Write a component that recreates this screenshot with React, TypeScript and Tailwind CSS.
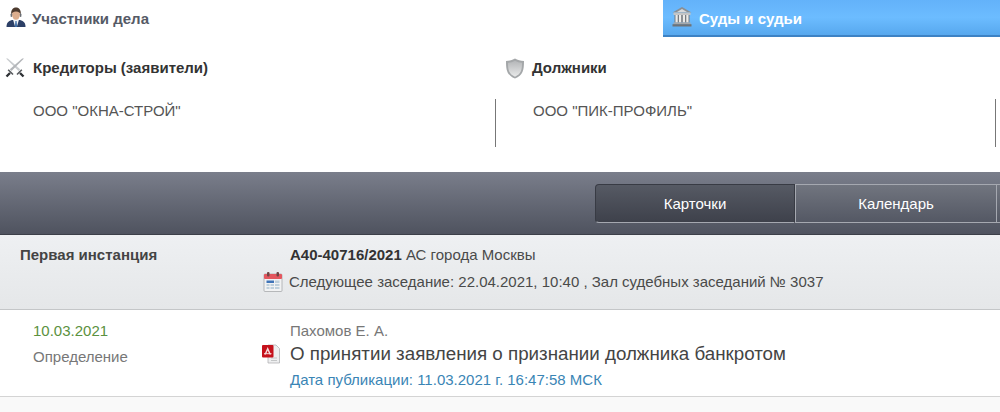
const font = "font-['Liberation_Sans',Arial,sans-serif]";

function PersonIcon() {
  return (
    <svg width="20" height="20" viewBox="0 0 20 20" className="shrink-0">
      <path d="M.5 20c0-4 1.500-5.800 5.500-7h8c4 1.200 5.500 3 5.500 7z" fill="#2c3f66" />
      <path d="M7 12.500h6L10.800 20H9.200z" fill="#f1f3f6" />
      <path d="M9.400 14h1.200l.5 6H8.900z" fill="#3d6ea8" />
      <ellipse cx="10" cy="7.500" rx="4" ry="5.200" fill="#dcae8e" />
      <path d="M5.300 8C4.500 3 7 .5 10 .5S15.500 3 14.700 8c-.6-2.200-1.800-3.500-4.700-3.500S5.900 5.800 5.300 8z" fill="#4c3a2e" />
      <rect x="4.600" y="6.500" width="1.500" height="3.500" rx=".7" fill="#6b6f75" />
      <rect x="13.900" y="6.500" width="1.500" height="3.500" rx=".7" fill="#6b6f75" />
    </svg>
  );
}

function SwordsIcon() {
  return (
    <svg width="20" height="20" viewBox="0 0 20 20" className="shrink-0">
      <path d="M1 .5 13.500 13l1.700-1.700L2.800.5z" fill="#c9cccf" />
      <path d="M19 .5 6.500 13l-1.700-1.700L17.200.5z" fill="#b3b6b9" />
      <path d="M3.200 11.800 8 16.500" stroke="#55585c" strokeWidth="1.600" />
      <path d="M16.800 11.800 12 16.500" stroke="#55585c" strokeWidth="1.600" />
      <path d="M5 15 1.500 18.500M15 15l3.500 3.500" stroke="#2e3135" strokeWidth="2.400" />
    </svg>
  );
}

function ShieldIcon() {
  return (
    <svg width="20" height="21" viewBox="0 0 20 21" className="shrink-0">
      <defs>
        <linearGradient id="sh" x1="0" y1="0" x2="0" y2="1">
          <stop offset="0" stopColor="#b4b6b8" />
          <stop offset="1" stopColor="#e9eaea" />
        </linearGradient>
      </defs>
      <path d="M10 .5c2.500 1.500 5.500 2.400 9 2.400 0 9.500-1 14-9 17.600C2 17 1 12.400 1 2.900 4.500 2.900 7.500 2 10 .5z" fill="#a4a7a9" />
      <path d="M10 2.800c2.200 1.200 4.700 1.900 7 2 0 7.600-1 11.200-7 13.900C4 16 3 12.400 3 4.800c2.300-.1 4.800-.8 7-2z" fill="url(#sh)" />
    </svg>
  );
}

function CourtIcon() {
  return (
    <svg width="20" height="20" viewBox="0 0 20 20" className="shrink-0">
      <path d="M10 0 19.500 5.500H.5z" fill="#8b8f93" />
      <path d="M10 2 15 5H5z" fill="#d8d9da" />
      <rect x="1.500" y="5.500" width="17" height="2.500" fill="#c4c5c6" />
      <rect x="2.500" y="8" width="15" height="7.500" fill="#777b80" />
      <path d="M3.500 8h2.200v7.500H3.500zM7 8h2.200v7.500H7zM10.800 8H13v7.500h-2.200zM14.300 8h2.200v7.500h-2.200z" fill="#ecebe8" />
      <rect x="1.500" y="15.500" width="17" height="1.700" fill="#a6a8aa" />
      <rect x=".5" y="17.200" width="19" height="2.300" fill="#6f7377" />
    </svg>
  );
}

function CalendarIcon() {
  return (
    <svg width="20" height="20" viewBox="0 0 20 20" className="shrink-0">
      <rect x="1" y="2" width="18" height="17.500" rx="1" fill="#f1f2f3" stroke="#9fa1a3" strokeWidth=".7" />
      <rect x="1" y="2" width="18" height="5" rx="1" fill="#e4575f" />
      <rect x="4" y="0" width="2.500" height="4.500" rx="1" fill="#6f4545" />
      <rect x="13.500" y="0" width="2.500" height="4.500" rx="1" fill="#6f4545" />
      <path d="M3.500 8.500H11v2.500H3.500z" fill="#3f74b8" />
      <path d="M12 8.500h4.500v2.500H12zM3.500 12h3v2h-3zM7.500 12h3.500v2H7.500zM12 12h4.500v2H12zM3.500 15h3v2h-3zM7.500 15h3.500v2H7.500zM12 15h4.500v2H12z" fill="#bfd0dc" />
    </svg>
  );
}

function PdfIcon() {
  return (
    <svg width="20" height="20" viewBox="0 0 20 20" className="shrink-0">
      <path d="M7 1h8l3.500 3.500V19H7z" fill="#eeeff0" stroke="#a9abad" strokeWidth=".7" />
      <path d="M10 14h6M10 16.500h6" stroke="#b9bbbd" strokeWidth=".8" />
      <rect x="1" y="1" width="11.500" height="12.500" rx="1" fill="#c5121c" />
      <path d="M6.700 3 10 10.500H8.500L6.700 6.500 4.900 10.500H3.400z" fill="#f7dede" />
      <path d="M3 9.200h7.500v1H3z" fill="#f7dede" />
    </svg>
  );
}

export default function App() {
  return (
    <div className={`${font} w-[1000px] h-[412px] overflow-hidden bg-white text-[15px] leading-[18px] text-[#4a4a4a]`}>
      <div className="flex h-[37px]">
        <div className="flex w-[663px] items-start pl-[6px] pt-[7px] gap-[6px]">
          <PersonIcon />
          <span className="font-bold text-[#555a66] pt-[3px]">Участники дела</span>
        </div>
        <div className="flex flex-1 items-start gap-[7px] pl-[9px] pt-[7px] pb-[1px] bg-gradient-to-b from-[#63b2fa] via-[#6cbcff] to-[#57a8ee] border-b-2 border-[#3d82c4]">
          <CourtIcon />
          <span className="font-bold text-white pt-[3px]">Суды и судьи</span>
        </div>
      </div>

      <div className="flex h-[135px]">
        <div className="w-[500px] pt-[21px]">
          <div className="flex items-center gap-[8px] pl-[5px] h-[20px]">
            <SwordsIcon />
            <span className="font-bold text-[#333]">Кредиторы (заявители)</span>
          </div>
          <div className="flex mt-[21px] h-[48px]">
            <div className="flex-1 pl-[33px] text-[#555] pt-[3px]">ООО "ОКНА-СТРОЙ"</div>
            <div className="w-px h-[48px] bg-[#777] mr-[4px]" />
          </div>
        </div>
        <div className="w-[500px] pt-[21px]">
          <div className="flex items-center gap-[7px] pl-[5px] h-[20px]">
            <ShieldIcon />
            <span className="font-bold text-[#333]">Должники</span>
          </div>
          <div className="flex mt-[21px] h-[48px]">
            <div className="flex-1 pl-[33px] text-[#555] pt-[3px]">ООО "ПИК-ПРОФИЛЬ"</div>
            <div className="w-px h-[48px] bg-[#777] mr-[4px]" />
          </div>
        </div>
      </div>

      <div className="flex justify-start h-[63px] pl-[595px] pt-[12px] bg-gradient-to-b from-[#7a7e8b] to-[#4f535f] border-b border-[#3c3f48]">
        <div className="flex h-[39px] text-white">
          <div className="flex w-[200px] shrink-0 items-center justify-center rounded-l-[4px] border border-[#383b44] border-b-[#a5a8b0] bg-gradient-to-b from-[#565a64] to-[#3e414b]">Карточки</div>
          <div className="flex w-[202px] shrink-0 items-center justify-center border border-[#a5a8b0] bg-gradient-to-b from-[#71757f] to-[#545864]">Календарь</div>
          <div className="w-[4px] shrink-0 border-t border-b border-[#a5a8b0] bg-gradient-to-b from-[#71757f] to-[#545864]" />
        </div>
      </div>

      <div className="flex h-[75px] bg-gradient-to-b from-[#eef0f2] to-[#e5e7e9] border-b border-[#c4c6c8]">
        <div className="w-[263px] shrink-0 pl-[20px] pt-[11px] font-bold text-[#444]">Первая инстанция</div>
        <div className="flex-1">
          <div className="pl-[27px] pt-[11px]">
            <span className="font-bold text-[#333]">А40-40716/2021</span> АС города Москвы
          </div>
          <div className="flex items-center gap-[6px] mt-[8px] h-[20px]">
            <CalendarIcon />
            <span>Следующее заседание: 22.04.2021, 10:40 , Зал судебных заседаний № 3037</span>
          </div>
        </div>
      </div>

      <div className="flex h-[87px] border-b border-[#d4d4d4]">
        <div className="w-[261px] shrink-0 pl-[33px] pt-[12px]">
          <div className="text-[#5b9140]">10.03.2021</div>
          <div className="text-[#777] mt-[8px]">Определение</div>
        </div>
        <div className="flex-1 pt-[12px]">
          <div className="pl-[29px] text-[#777]">Пахомов Е. А.</div>
          <div className="flex items-center gap-[9px] h-[24px] mt-[2px]">
            <PdfIcon />
            <span className="text-[18.75px] leading-[24px] text-[#444]">О принятии заявления о признании должника банкротом</span>
          </div>
          <div className="pl-[29px] mt-[5px] text-[#3a85b5]">Дата публикации: 11.03.2021 г. 16:47:58 МСК</div>
        </div>
      </div>
      <div className="h-[16px] bg-[#f9f9f9]" />
    </div>
  );
}
